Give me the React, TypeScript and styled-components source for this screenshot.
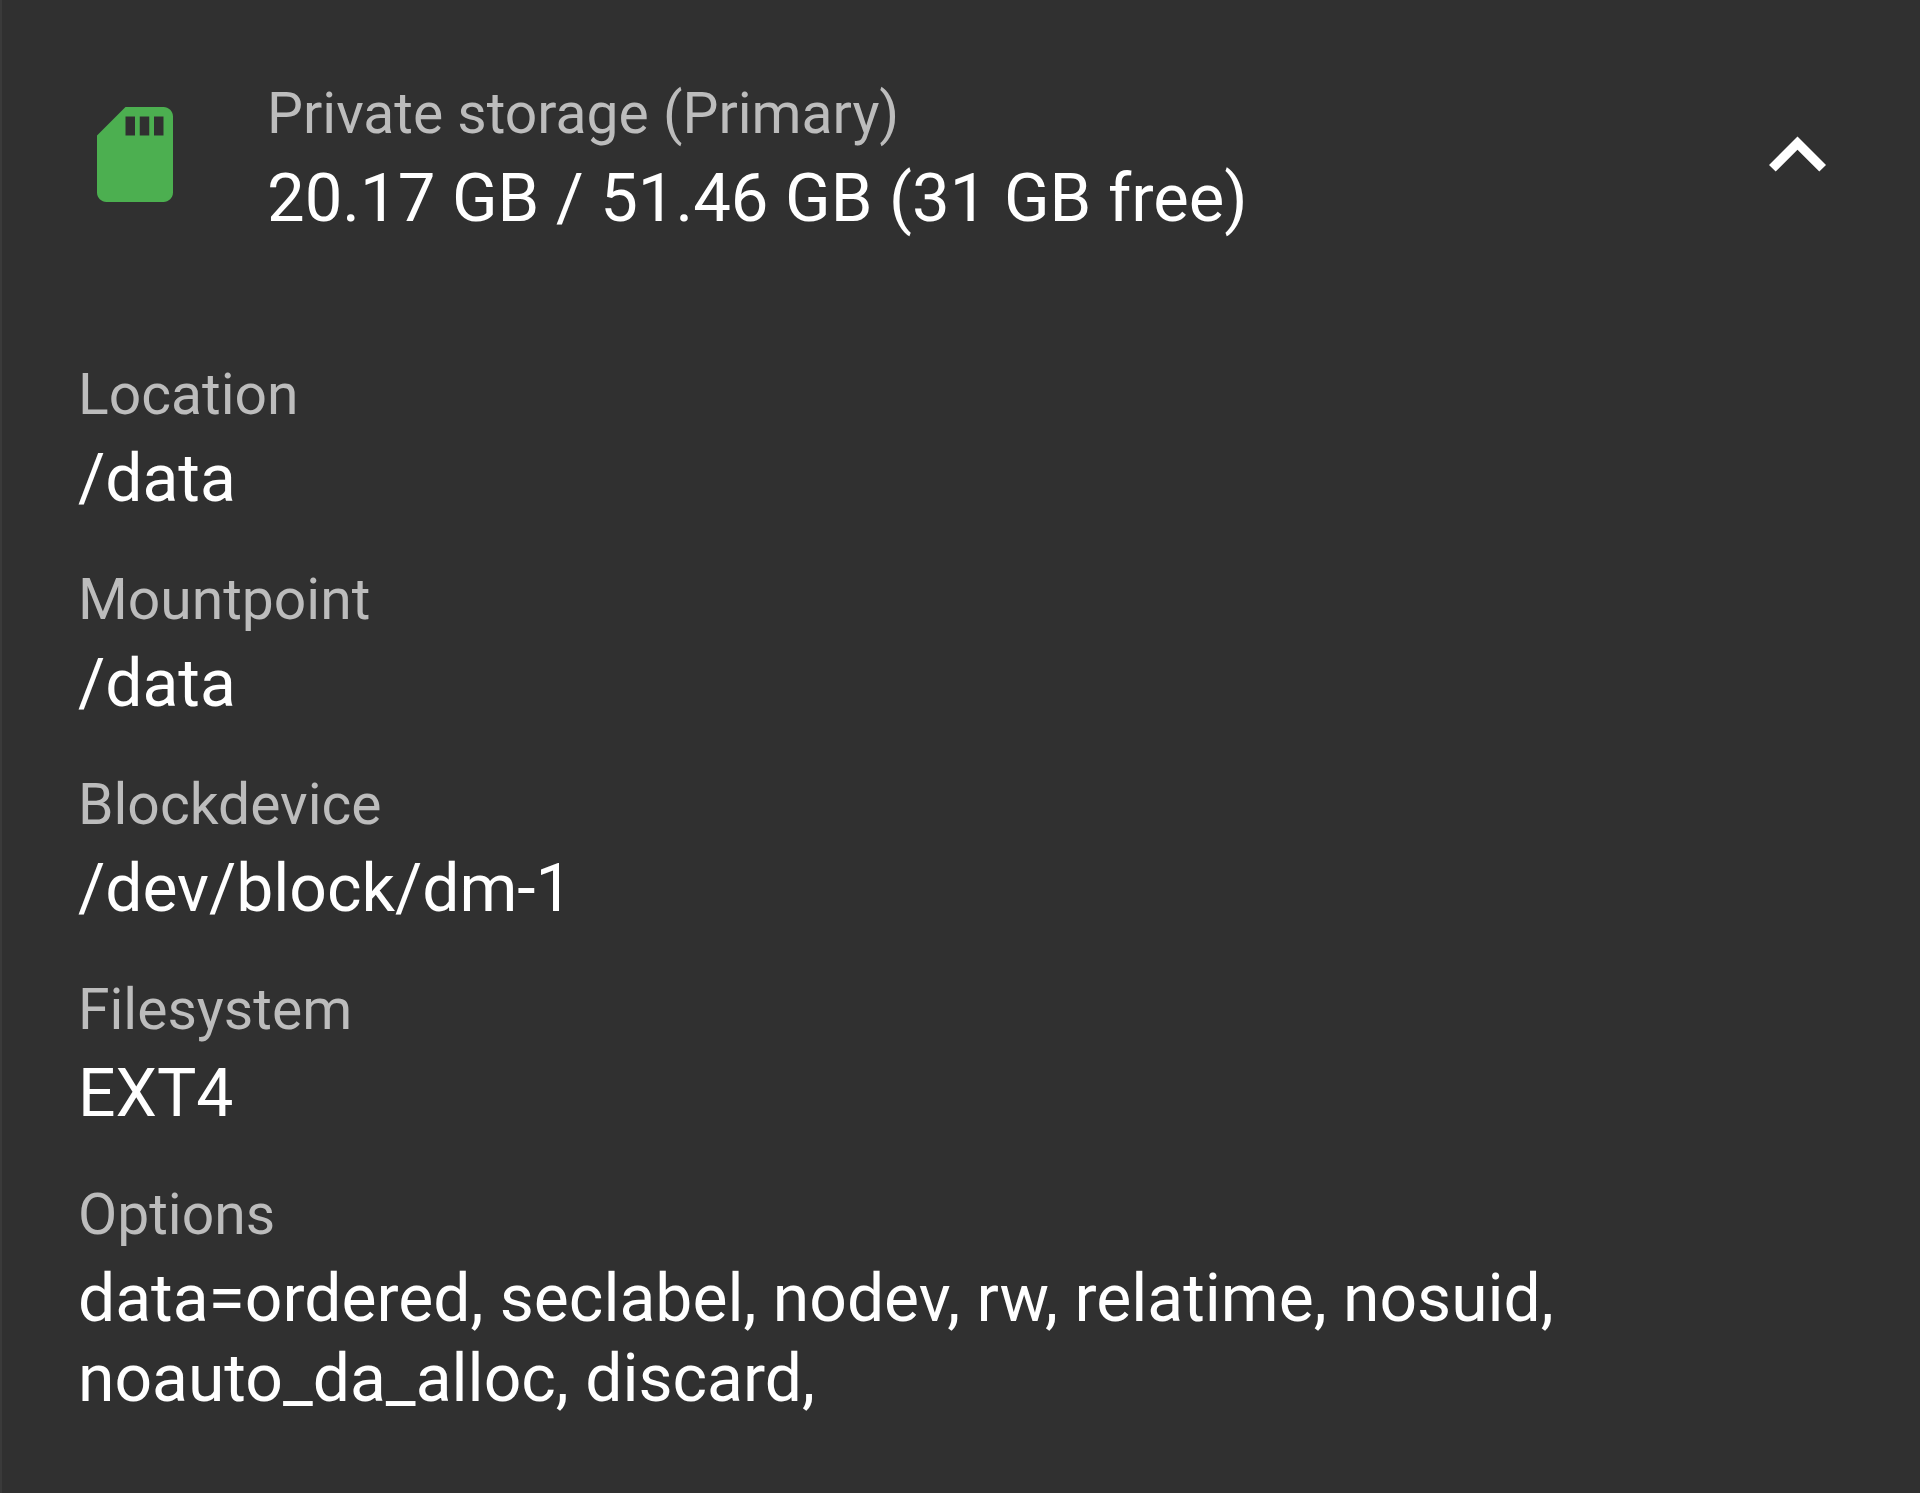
import React, { useState } from 'react';
import styled, { createGlobalStyle } from 'styled-components';

const GlobalStyle = createGlobalStyle`
  * { box-sizing: border-box; }
  body { margin: 0; background: #303030; }
`;

const Card = styled.main`
  min-height: 100vh;
  padding: 80px 76px 64px;
  border-left: 2px solid #3a3a3a;
  background: #303030;
  color: #ffffff;
  font-family: Roboto, "Noto Sans", sans-serif;
`;

const Header = styled.header`
  display: flex;
  align-items: center;
  padding: 0 18px 0 19px;
`;

const CardIcon = styled.svg`
  flex: none;
  width: 76px;
  height: 95px;
  margin: 0 94px 10px 0;
  fill: #4caf50;
`;

const Summary = styled.div`
  flex: 1;
`;

const Label = styled.div`
  margin-bottom: 10px;
  font-size: 57px;
  line-height: 68px;
  color: #bcbcbc;
`;

const Value = styled.div<{ $large?: boolean }>`
  font-size: ${({ $large }) => ($large ? '67px' : '66px')};
  line-height: 80px;
  color: #ffffff;
`;

const Toggle = styled.button`
  display: flex;
  margin: 0 0 10px;
  padding: 0;
  border: 0;
  background: none;
  color: #ffffff;
  cursor: pointer;
`;

const Chevron = styled.svg`
  width: 57px;
  height: 36px;
  fill: currentColor;
`;

const Details = styled.dl`
  display: grid;
  gap: 47px;
  margin: 123px 0 0;
`;

const Detail = styled.div``;
const Term = styled(Label).attrs({ as: 'dt' })``;
const Description = styled(Value).attrs({ as: 'dd' })`
  margin: 0;
`;

const details = [
  { label: 'Location', value: '/data' },
  { label: 'Mountpoint', value: '/data' },
  { label: 'Blockdevice', value: '/dev/block/dm-1' },
  { label: 'Filesystem', value: 'EXT4' },
  { label: 'Options', value: 'data=ordered, seclabel, nodev, rw, relatime, nosuid, noauto_da_alloc, discard,' },
];

export default function App() {
  const [open, setOpen] = useState(true);
  return (
    <>
      <GlobalStyle />
      <Card>
        <Header>
          <CardIcon viewBox="4 2 16 20" aria-hidden="true">
            <path d="M18 2h-8L4 8v12c0 1.100.9 2 2 2h12c1.100 0 2-.9 2-2V4c0-1.100-.9-2-2-2zm-6 6h-2V4h2v4zm3 0h-2V4h2v4zm3 0h-2V4h2v4z" />
          </CardIcon>
          <Summary>
            <Label>Private storage (Primary)</Label>
            <Value $large>20.17 GB / 51.46 GB (31 GB free)</Value>
          </Summary>
          <Toggle type="button" aria-label="Toggle details" aria-expanded={open} onClick={() => setOpen(!open)}>
            <Chevron viewBox="6 8 12 7.410" aria-hidden="true">
              <path d="M12 8l-6 6 1.410 1.410L12 10.830l4.590 4.580L18 14z" />
            </Chevron>
          </Toggle>
        </Header>
        {open && (
          <Details>
            {details.map(({ label, value }) => (
              <Detail key={label}>
                <Term>{label}</Term>
                <Description>{value}</Description>
              </Detail>
            ))}
          </Details>
        )}
      </Card>
    </>
  );
}
